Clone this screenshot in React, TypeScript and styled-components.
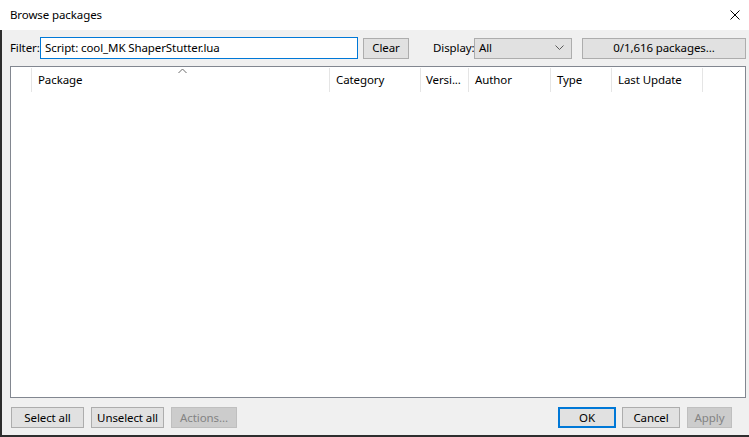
import React from "react";
import styled, { createGlobalStyle, css } from "styled-components";

const GlobalStyle = createGlobalStyle`
  html, body {
    margin: 0;
    padding: 0;
    background: #ffffff;
  }
  body {
    font-family: "Segoe UI", "Noto Sans", sans-serif;
    font-size: 11.5px;
    letter-spacing: -0.1px;
    color: #000000;
  }
  * {
    box-sizing: border-box;
  }
`;

const Window = styled.div`
  width: 749px;
  height: 437px;
  display: flex;
  flex-direction: column;
  overflow: hidden;
`;

const TitleBar = styled.div`
  height: 30px;
  flex: none;
  display: flex;
  align-items: center;
  justify-content: space-between;
  padding: 0 9px 0 10px;
  background: #ffffff;
`;

const Title = styled.span`
  padding-bottom: 1px;
`;

const CloseIcon = styled.svg`
  width: 10px;
  height: 10px;
  margin-top: -1px;
`;

const Body = styled.div`
  flex: 1;
  display: flex;
  flex-direction: column;
  background: #f0f0f0;
  border-left: 2px solid #2e2e2e;
  border-bottom: 2px solid #2e2e2e;
  padding: 7px 0 0 8px;
`;

const FilterRow = styled.div`
  display: flex;
  align-items: center;
  height: 22px;
`;

const Label = styled.label<{ $w: number; $ml?: number }>`
  width: ${(p) => p.$w}px;
  flex: none;
  margin-left: ${(p) => p.$ml ?? 0}px;
  white-space: nowrap;
  overflow: hidden;
  padding-bottom: 1px;
`;

const FilterInput = styled.div`
  width: 318px;
  height: 22px;
  border: 1px solid #0078d7;
  background: #ffffff;
  display: flex;
  align-items: center;
  padding: 0 0 1px 4px;
  white-space: nowrap;
`;

const buttonBase = css`
  height: 21px;
  display: flex;
  align-items: center;
  justify-content: center;
  background: #e1e1e1;
  border: 1px solid #adadad;
  color: #000000;
  padding: 0 0 1px;
  white-space: nowrap;
`;

const Button = styled.div<{ $w: number; $ml?: number; $disabled?: boolean; $default?: boolean }>`
  ${buttonBase}
  width: ${(p) => p.$w}px;
  margin-left: ${(p) => p.$ml ?? 0}px;
  ${(p) =>
    p.$disabled &&
    css`
      background: #cccccc;
      border-color: #bfbfbf;
      color: #838383;
    `}
  ${(p) =>
    p.$default &&
    css`
      border: 2px solid #0078d7;
    `}
`;

const Select = styled.div`
  ${buttonBase}
  width: 98px;
  justify-content: space-between;
  padding: 0 7px 1px 4px;
`;

const Chevron = styled.svg`
  width: 9px;
  height: 5px;
`;

const ListView = styled.div`
  margin-top: 7px;
  width: 736px;
  height: 332px;
  border: 1px solid #828790;
  background: #ffffff;
  padding-top: 1px;
`;

const HeaderRow = styled.div`
  position: relative;
  display: flex;
  height: 24px;
`;

const HeaderCell = styled.div<{ $w: number; $pad?: number }>`
  width: ${(p) => p.$w}px;
  flex: none;
  border-right: 1px solid #e5e5e5;
  padding-left: ${(p) => p.$pad ?? 6}px;
  display: flex;
  align-items: center;
  padding-bottom: 1px;
  white-space: nowrap;
  overflow: hidden;
`;

const SortCaret = styled.svg`
  position: absolute;
  left: 167px;
  top: 0px;
  width: 9px;
  height: 6px;
`;

const Footer = styled.div`
  display: flex;
  align-items: center;
  margin-top: 9px;
  padding-left: 1px;
`;

const Spacer = styled.div`
  flex: 1;
`;

const columns: { label: string; w: number; pad?: number }[] = [
  { label: "", w: 21 },
  { label: "Package", w: 298 },
  { label: "Category", w: 91 },
  { label: "Versi...", w: 48, pad: 5 },
  { label: "Author", w: 82 },
  { label: "Type", w: 61 },
  { label: "Last Update", w: 91 },
];

export default function App() {
  return (
    <>
      <GlobalStyle />
      <Window>
        <TitleBar>
          <Title>Browse packages</Title>
          <CloseIcon viewBox="0 0 10 10">
            <path d="M0.5 0.5 L9.5 9.5 M9.5 0.5 L0.5 9.5" stroke="#000" strokeWidth="1" fill="none" />
          </CloseIcon>
        </TitleBar>
        <Body>
          <FilterRow>
            <Label $w={30}>Filter:</Label>
            <FilterInput>Script: cool_MK ShaperStutter.lua</FilterInput>
            <Button $w={46} $ml={5}>Clear</Button>
            <Label $w={41} $ml={24}>Display:</Label>
            <Select>
              <span>All</span>
              <Chevron viewBox="0 0 9 5">
                <path d="M0.5 0.5 L4.5 4.5 L8.5 0.5" stroke="#5a5a5a" strokeWidth="1" fill="none" />
              </Chevron>
            </Select>
            <Button $w={164} $ml={10}>0/1,616 packages...</Button>
          </FilterRow>
          <ListView>
            <HeaderRow>
              {columns.map((c, i) => (
                <HeaderCell key={i} $w={c.w} $pad={c.pad}>
                  {c.label}
                </HeaderCell>
              ))}
              <SortCaret viewBox="0 0 9 6">
                <path d="M0.5 5 L4.5 1 L8.5 5" stroke="#6a6a6a" strokeWidth="1" fill="none" />
              </SortCaret>
            </HeaderRow>
          </ListView>
          <Footer>
            <Button $w={73}>Select all</Button>
            <Button $w={73} $ml={7}>Unselect all</Button>
            <Button $w={66} $ml={7} $disabled>Actions...</Button>
            <Spacer />
            <Button $w={58} $default>OK</Button>
            <Button $w={58} $ml={6}>Cancel</Button>
            <Button $w={45} $ml={7} $disabled style={{ marginRight: 17 }}>Apply</Button>
          </Footer>
        </Body>
      </Window>
    </>
  );
}
